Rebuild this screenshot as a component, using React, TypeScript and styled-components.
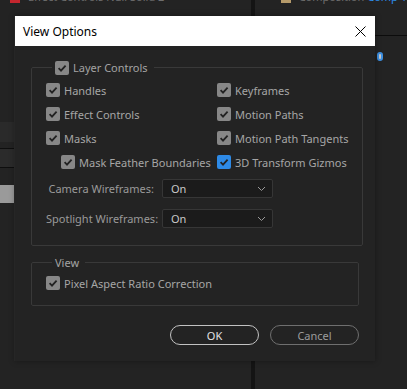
import React from "react";
import styled, { createGlobalStyle } from "styled-components";

const GlobalStyle = createGlobalStyle`
  html, body {
    margin: 0;
    padding: 0;
    background: #1f1f1f;
  }
  body {
    font-family: "Segoe UI", "Noto Sans", "Open Sans", sans-serif;
  }
  * {
    box-sizing: border-box;
  }
`;

const Screen = styled.div`
  position: relative;
  width: 407px;
  height: 389px;
  overflow: hidden;
  display: flex;
  background: #1f1f1f;
`;

const LeftPanel = styled.div`
  width: 251px;
  display: flex;
  flex-direction: column;
  background: #232323;
`;

const Divider = styled.div`
  width: 4px;
  background: #141414;
`;

const RightPanel = styled.div`
  flex: 1;
  display: flex;
  flex-direction: column;
  background: #232323;
`;

const TabStrip = styled.div<{ $pad: number }>`
  height: 16px;
  display: flex;
  align-items: flex-start;
  gap: 8px;
  padding-left: ${(p) => p.$pad}px;
  overflow: hidden;
  background: #232323;
`;

const TabIcon = styled.span<{ $color: string }>`
  width: 10px;
  height: 3px;
  background: ${(p) => p.$color};
`;

const TabText = styled.span`
  margin-top: -10px;
  font-size: 11px;
  line-height: 14px;
  color: #6e6e6e;
  white-space: nowrap;
`;

const CompName = styled.span`
  color: #2d8ceb;
`;

const SideRow = styled.div<{ $h: number; $bg: string; $line?: boolean }>`
  height: ${(p) => p.$h}px;
  width: 15px;
  background: ${(p) => p.$bg};
  border-top: ${(p) => (p.$line ? "1px solid #0e0e0e" : "none")};
  border-bottom: ${(p) => (p.$line ? "1px solid #0e0e0e" : "none")};
`;

const CompHeader = styled.div`
  height: 20px;
  border-bottom: 1px solid #0c0c0c;
`;

const CompIcon = styled.div`
  margin: 16px 24px 0 auto;
  width: 6px;
  height: 9px;
  border-radius: 3px;
  border: 2px solid #3d8fe0;
  background: #c8c8c8;
`;

/* dialog */

const Dialog = styled.div`
  position: absolute;
  left: 15px;
  top: 16px;
  width: 360px;
  height: 345px;
  background: #232323;
  box-shadow: -1px 0 0 #262626, 0 0 6px rgba(0, 0, 0, 0.35);
  display: flex;
  flex-direction: column;
`;

const TitleBar = styled.div`
  height: 30px;
  background: #ffffff;
  display: flex;
  align-items: center;
  justify-content: space-between;
  padding-left: 8px;
`;

const Title = styled.span`
  font-size: 12px;
  color: #000000;
`;

const CloseButton = styled.button`
  width: 30px;
  height: 30px;
  border: none;
  background: transparent;
  padding: 0;
  display: flex;
  align-items: center;
  justify-content: center;
  cursor: pointer;
`;

const Body = styled.div`
  flex: 1;
  padding: 14px 16px 0 16px;
  display: flex;
  flex-direction: column;
`;

const Group = styled.fieldset<{ $pb: number }>`
  margin: 0;
  padding: 0 14px ${(p) => p.$pb}px 14px;
  border: 1px solid #393939;
  border-radius: 2px;
  & + & {
    margin-top: 9px;
  }
`;

const Legend = styled.legend`
  margin-left: 6px;
  padding: 0 6px 0 3px;
  display: flex;
  align-items: center;
  gap: 4px;
  font-size: 11px;
  color: #a3a3a3;
`;

const CheckGrid = styled.div`
  display: grid;
  grid-template-columns: 171px 1fr;
  grid-auto-rows: 24px;
  padding-top: 3px;
`;

const CheckRow = styled.label<{ $indent?: boolean }>`
  display: flex;
  align-items: center;
  gap: 4px;
  padding-left: ${(p) => (p.$indent ? 15 : 0)}px;
  font-size: 11px;
  color: #a6a6a6;
  white-space: nowrap;
`;

const Box = styled.span<{ $blue?: boolean }>`
  width: 14px;
  height: 14px;
  border-radius: 2px;
  background: ${(p) => (p.$blue ? "#2e8ae6" : "#878787")};
  display: flex;
  align-items: center;
  justify-content: center;
  flex-shrink: 0;
`;

const SelectRows = styled.div`
  display: grid;
  grid-template-columns: 108px 111px;
  column-gap: 8px;
  row-gap: 11px;
  margin-top: 5px;
`;

const SelectLabel = styled.span`
  font-size: 11px;
  color: #9a9a9a;
  text-align: right;
  align-self: center;
  white-space: nowrap;
`;

const SelectBox = styled.div`
  height: 19px;
  background: #1b1b1b;
  border: 1px solid #363636;
  border-radius: 2px;
  display: flex;
  align-items: center;
  justify-content: space-between;
  padding: 0 6px 0 8px;
  font-size: 11px;
  color: #c9c9c9;
`;

const ViewRow = styled.div`
  height: 24px;
  display: flex;
  align-items: center;
  padding-top: 2px;
`;

const Buttons = styled.div`
  display: flex;
  justify-content: flex-end;
  gap: 11px;
  margin-top: 19px;
`;

const Button = styled.button<{ $primary?: boolean }>`
  width: 89px;
  height: 20px;
  border-radius: 10px;
  background: transparent;
  border: 1px solid ${(p) => (p.$primary ? "#c2c2c2" : "#6f6f6f")};
  color: ${(p) => (p.$primary ? "#e4e4e4" : "#9c9c9c")};
  font-family: inherit;
  font-size: 11px;
  padding: 0;
  cursor: pointer;
`;

const Check = ({ blue }: { blue?: boolean }) => (
  <Box $blue={blue}>
    <svg width="10" height="10" viewBox="0 0 10 10">
      <path d="M1.6 5.2 L4 7.6 L8.6 2.6" fill="none" stroke="#222" strokeWidth="1.8" />
    </svg>
  </Box>
);

const Chevron = () => (
  <svg width="9" height="6" viewBox="0 0 9 6">
    <path d="M1 1 L4.5 4.5 L8 1" fill="none" stroke="#9a9a9a" strokeWidth="1" />
  </svg>
);

const checks: { label: string; indent?: boolean; blue?: boolean }[] = [
  { label: "Handles" },
  { label: "Keyframes" },
  { label: "Effect Controls" },
  { label: "Motion Paths" },
  { label: "Masks" },
  { label: "Motion Path Tangents" },
  { label: "Mask Feather Boundaries", indent: true },
  { label: "3D Transform Gizmos", blue: true },
];

export default function App() {
  return (
    <>
      <GlobalStyle />
      <Screen>
        <LeftPanel>
          <TabStrip $pad={10}>
            <TabIcon $color="#c4262e" />
            <TabText>Effect Controls Null Solid 2</TabText>
          </TabStrip>
          <SideRow $h={106} $bg="#232323" />
          <SideRow $h={20} $bg="#2a2a2a" />
          <SideRow $h={6} $bg="#232323" />
          <SideRow $h={20} $bg="#2b2b2b" $line />
          <SideRow $h={17} $bg="#232323" />
          <SideRow $h={18} $bg="#9a9a9a" />
        </LeftPanel>
        <Divider />
        <RightPanel>
          <TabStrip $pad={26}>
            <TabIcon $color="#b59a6a" />
            <TabText>
              Composition <CompName>Comp 1</CompName>
            </TabText>
          </TabStrip>
          <CompHeader />
          <CompIcon />
        </RightPanel>

        <Dialog>
          <TitleBar>
            <Title>View Options</Title>
            <CloseButton>
              <svg width="11" height="11" viewBox="0 0 11 11">
                <path d="M0.5 0.5 L10.5 10.5 M10.5 0.5 L0.5 10.5" stroke="#000" strokeWidth="1" />
              </svg>
            </CloseButton>
          </TitleBar>
          <Body>
            <Group $pb={17}>
              <Legend>
                <Check />
                Layer Controls
              </Legend>
              <CheckGrid>
                {checks.map((c) => (
                  <CheckRow key={c.label} $indent={c.indent}>
                    <Check blue={c.blue} />
                    {c.label}
                  </CheckRow>
                ))}
              </CheckGrid>
              <SelectRows>
                <SelectLabel>Camera Wireframes:</SelectLabel>
                <SelectBox>
                  On
                  <Chevron />
                </SelectBox>
                <SelectLabel>Spotlight Wireframes:</SelectLabel>
                <SelectBox>
                  On
                  <Chevron />
                </SelectBox>
              </SelectRows>
            </Group>
            <Group $pb={11}>
              <Legend>View</Legend>
              <ViewRow>
                <CheckRow>
                  <Check />
                  Pixel Aspect Ratio Correction
                </CheckRow>
              </ViewRow>
            </Group>
            <Buttons>
              <Button $primary>OK</Button>
              <Button>Cancel</Button>
            </Buttons>
          </Body>
        </Dialog>
      </Screen>
    </>
  );
}
